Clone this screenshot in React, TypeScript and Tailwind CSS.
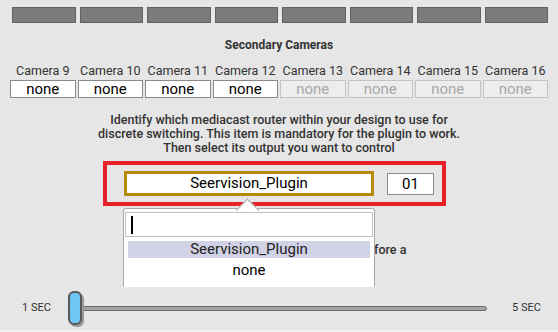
import React from "react";

const cameras = [9, 10, 11, 12, 13, 14, 15, 16];

function CameraSlot({ num }: { num: number }) {
  const active = num <= 12;
  return (
    <div className="flex flex-col items-center">
      <div className="text-[12.5px] leading-[16px] text-[#333] whitespace-nowrap">Camera {num}</div>
      <div
        className={
          active
            ? "mt-px w-full h-[18px] border border-[#8a8a8a] bg-white text-black text-[15px] leading-[16px] text-center"
            : "mt-px w-full h-[18px] border border-[#c4c4c4] bg-[#ededed] text-[#a8a8a8] text-[15px] leading-[16px] text-center"
        }
      >
        none
      </div>
    </div>
  );
}

export default function App() {
  return (
    <div
      className="relative w-[558px] h-[332px] overflow-hidden bg-[#e6e6e6] text-[#222]"
      style={{ fontFamily: "Roboto, 'Liberation Sans', sans-serif" }}
    >
      {/* top button strip */}
      <div className="ml-[12px] mt-[7px] w-[536px] grid grid-cols-8 gap-x-[4px]">
        {cameras.map((c) => (
          <div key={c} className="h-[16px] bg-[#7b7b7b] border border-[#626262]" />
        ))}
      </div>

      <div className="mt-[15px] text-center text-[12px] leading-[14px] font-bold text-[#333]">
        Secondary Cameras
      </div>

      <div className="ml-[10px] mt-[11px] w-[538px] grid grid-cols-8 gap-x-[2px]">
        {cameras.map((c) => (
          <CameraSlot key={c} num={c} />
        ))}
      </div>

      <p className="mt-[15px] text-center text-[12.5px] leading-[14px] font-medium text-[#333]">
        Identify which mediacast router within your design to use for
        <br />
        discrete switching. This item is mandatory for the plugin to work.
        <br />
        Then select its output you want to control
      </p>

      {/* router selection, highlighted */}
      <div className="ml-[103px] mt-[6px] w-[343px] h-[45px] border-4 border-[#e8202a] flex items-center pl-[17px] gap-[13px]">
        <div className="w-[250px] h-[25px] border-[3px] border-[#b88a0c] bg-white text-[15px] leading-[19px] text-black text-center">
          Seervision_Plugin
        </div>
        <div className="w-[47px] h-[22px] border border-[#8a8a8a] bg-white text-[15px] leading-[20px] text-black text-center">
          01
        </div>
      </div>

      <p className="mt-[37px] pr-[13px] text-center text-[12.5px] leading-[14px] font-medium text-[#333]">
        Set how long each camera holds a shot before a
      </p>

      {/* slider */}
      <div className="mt-[34px] flex items-center pl-[22px]">
        <div className="w-[46px] text-[11px] leading-[12px] text-[#333]">1 SEC</div>
        <div className="relative w-[419px] h-[34px] flex items-center">
          <div className="w-full h-[5px] rounded-full bg-[#a4a4a4] border border-[#6a6a6a]" />
          <div className="absolute left-0 top-0 w-[14px] h-[34px] rounded-[6px] bg-[#6ec6f2] border-2 border-[#585858] shadow-[2px_2px_0_#9a9a9a]" />
        </div>
        <div className="ml-[25px] text-[11px] leading-[12px] text-[#333]">5 SEC</div>
      </div>

      <div className="absolute left-0 bottom-0 w-full h-[2px] bg-[#f0f0f0]" />

      {/* dropdown popover */}
      <div className="absolute left-[123px] top-[208px] w-[252px] h-[79px] bg-white border border-[#a8a8a8] border-b-white rounded-t-[3px]">
        <div className="absolute left-[115px] top-[-7px] w-[17px] h-[17px] rotate-45 bg-white border-l border-t border-[#a8a8a8]" />
        <div className="relative mx-px mt-[3px] h-[25px] border border-[#c0c0c0] bg-white flex items-center pl-[5px]">
          <div className="w-[2px] h-[18px] bg-black" />
        </div>
        <div className="mx-[4px] mt-[4px] h-[17px] bg-[#d2d2e6] text-[15px] leading-[17px] text-[#222] text-center">
          Seervision_Plugin
        </div>
        <div className="mt-[3px] h-[18px] text-[15px] leading-[18px] text-black text-center">none</div>
      </div>
    </div>
  );
}
